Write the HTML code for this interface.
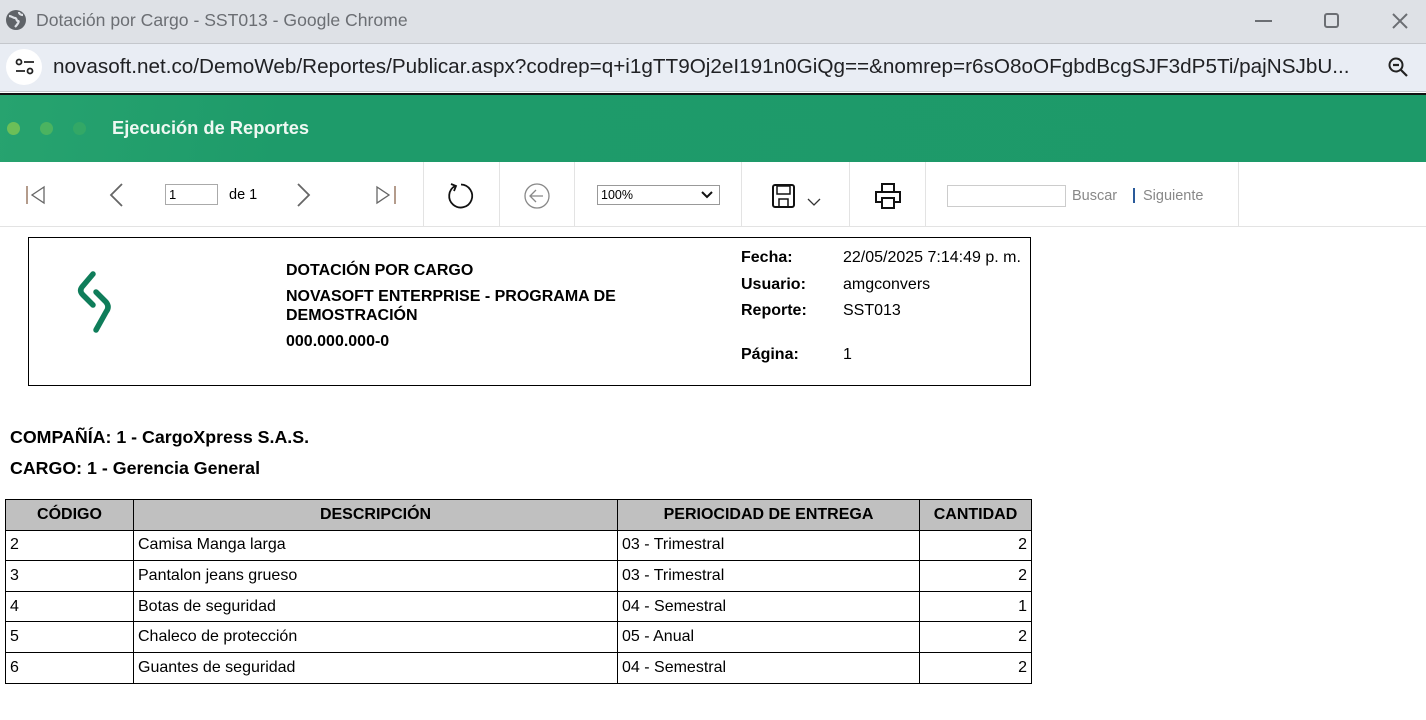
<!DOCTYPE html>
<html><head><meta charset="utf-8"><style>
*{margin:0;padding:0;box-sizing:border-box}
body{width:1426px;height:720px;overflow:hidden;background:#fff;font-family:"Liberation Sans",Arial,sans-serif;position:relative}
.a{position:absolute;white-space:nowrap}
.b{font-weight:bold;font-size:16px;color:#000}
.t{font-size:16px;color:#000}
table{position:absolute;left:5px;top:499px;border-collapse:collapse;font-size:16px}
td,th{border:1px solid #000;height:30.6px;padding:0 4px;line-height:16px}
th{background:#c0c0c0;font-weight:bold;text-align:center}
.sep{position:absolute;top:162px;width:1px;height:64px;background:#e3e3e3}
</style></head><body>
<div class="a" style="left:0;top:0;width:1426px;height:43px;background:#dee1e6"></div>
<svg class="a" style="left:5px;top:9px" width="22" height="22" viewBox="0 0 22 22"><circle cx="11" cy="11" r="10" fill="#5f6368"/><path d="M4 7c3 0 4 2 6 2s1 3 3 3-1 4-3 6M14 3c0 2 2 3 4 3" stroke="#dee1e6" stroke-width="2.2" fill="none"/></svg>
<div class="a" style="left:36px;top:10px;font-size:17.6px;color:#6b6e73">Dotación por Cargo - SST013 - Google Chrome</div>
<div class="a" style="left:1255px;top:20px;width:17px;height:2px;background:#6b6e73"></div>
<div class="a" style="left:1324px;top:13px;width:15px;height:15px;border:2px solid #6b6e73;border-radius:3px"></div>
<svg class="a" style="left:1391px;top:12px" width="18" height="18"><path d="M2 2L16 16M16 2L2 16" stroke="#6b6e73" stroke-width="2"/></svg>
<div class="a" style="left:0;top:43px;width:1426px;height:49px;background:#e9edf4;border-top:1px solid #c4c7cc;border-bottom:1px solid #c4c7cc"></div>
<div class="a" style="left:6px;top:49px;width:36px;height:36px;border-radius:50%;background:#fff"></div>
<svg class="a" style="left:14px;top:57px" width="22" height="20"><circle cx="5" cy="5" r="2.5" fill="none" stroke="#222" stroke-width="1.8"/><path d="M10 5h10M2 14h9" stroke="#222" stroke-width="1.8"/><circle cx="16" cy="14" r="2.5" fill="none" stroke="#222" stroke-width="1.8"/></svg>
<div class="a" style="left:53px;top:55px;font-size:20.7px;color:#202124">novasoft.net.co/DemoWeb/Reportes/Publicar.aspx?codrep=q+i1gTT9Oj2eI191n0GiQg==&amp;nomrep=r6sO8oOFgbdBcgSJF3dP5Ti/pajNSJbU...</div>
<svg class="a" style="left:1387px;top:56px" width="24" height="24"><circle cx="9" cy="9" r="6.5" fill="none" stroke="#222" stroke-width="2"/><path d="M6 9h6M14 14l6 6" stroke="#222" stroke-width="2.2"/></svg>
<div class="a" style="left:0;top:93px;width:1426px;height:2px;background:#111"></div>
<div class="a" style="left:0;top:95px;width:1426px;height:67px;background:linear-gradient(100deg,#27a36f 0%,#1e9b6a 20%,#1d9a69 100%)"></div>
<div class="a" style="left:7px;top:122px;width:13px;height:13px;border-radius:50%;background:#6cbf58"></div>
<div class="a" style="left:40px;top:122px;width:13px;height:13px;border-radius:50%;background:#4bb360"></div>
<div class="a" style="left:73px;top:122px;width:13px;height:13px;border-radius:50%;background:#33a866"></div>
<div class="a" style="left:112px;top:117px;font-size:18.3px;font-weight:bold;color:#eef8f2">Ejecución de Reportes</div>
<div class="a" style="left:0;top:226px;width:1426px;height:1px;background:#e3e3e3"></div>
<div class="sep" style="left:423px"></div><div class="sep" style="left:499px"></div><div class="sep" style="left:574px"></div><div class="sep" style="left:741px"></div><div class="sep" style="left:849px"></div><div class="sep" style="left:925px"></div><div class="sep" style="left:1238px"></div>
<svg class="a" style="left:24px;top:184px" width="24" height="22"><path d="M3 2v18" stroke="#9a7a66" stroke-width="1.5"/><path d="M20 3L8 11l12 8z" fill="none" stroke="#666" stroke-width="1.3"/></svg>
<svg class="a" style="left:106px;top:182px" width="20" height="26"><path d="M16 2L5 13l11 11" fill="none" stroke="#666" stroke-width="1.8"/></svg>
<div class="a" style="left:165px;top:184px;width:53px;height:21px;border:1px solid #aaa;font-size:13px;padding:2px 3px">1</div>
<div class="a" style="left:229px;top:187px;font-size:14.5px">de 1</div>
<svg class="a" style="left:294px;top:182px" width="20" height="26"><path d="M4 2l11 11L4 24" fill="none" stroke="#666" stroke-width="1.8"/></svg>
<svg class="a" style="left:374px;top:184px" width="24" height="22"><path d="M21 2v18" stroke="#9a7a66" stroke-width="1.5"/><path d="M3 3l12 8-12 8z" fill="none" stroke="#666" stroke-width="1.3"/></svg>
<svg class="a" style="left:446px;top:181px" width="30" height="30"><path d="M9 5A11.5 11.5 0 1 0 15 3.5" fill="none" stroke="#111" stroke-width="1.8"/><path d="M5 3l5 2-2 5" fill="none" stroke="#111" stroke-width="1.8"/></svg>
<svg class="a" style="left:523px;top:182px" width="28" height="28"><circle cx="14" cy="14" r="12" fill="none" stroke="#888" stroke-width="1.3"/><path d="M20 14H8M13 8l-6 6 6 6" fill="none" stroke="#888" stroke-width="1.3"/></svg>
<div class="a" style="left:597px;top:185px;width:123px;height:20px;border:1px solid #999;font-size:12.5px;padding:2px 3px">100%</div>
<svg class="a" style="left:700px;top:190px" width="14" height="10"><path d="M2 2l5 5 5-5" fill="none" stroke="#111" stroke-width="2"/></svg>
<svg class="a" style="left:771px;top:183px" width="26" height="26"><rect x="2" y="2" width="21" height="22" rx="2" fill="none" stroke="#111" stroke-width="2"/><rect x="6" y="3" width="13" height="8" fill="none" stroke="#111" stroke-width="1.5"/><rect x="8" y="16" width="9" height="8" fill="none" stroke="#111" stroke-width="1.5"/></svg>
<svg class="a" style="left:806px;top:197px" width="16" height="10"><path d="M2 2l6 6 6-6" fill="none" stroke="#333" stroke-width="1.3"/></svg>
<svg class="a" style="left:874px;top:182px" width="28" height="28"><rect x="8" y="2" width="12" height="8" fill="none" stroke="#111" stroke-width="2"/><rect x="2" y="10" width="24" height="10" fill="none" stroke="#111" stroke-width="2"/><rect x="8" y="16" width="12" height="10" fill="#fff" stroke="#111" stroke-width="2"/></svg>
<div class="a" style="left:947px;top:185px;width:119px;height:22px;border:1px solid #ccc"></div>
<div class="a" style="left:1072px;top:188px;font-size:14.5px;color:#888">Buscar</div>
<div class="a" style="left:1133px;top:188px;width:2px;height:15px;background:#2a5a9a"></div>
<div class="a" style="left:1143px;top:188px;font-size:14.5px;color:#888">Siguiente</div>
<div class="a" style="left:28px;top:237px;width:1003px;height:149px;border:1px solid #000"></div>
<svg class="a" style="left:74px;top:270px" width="42" height="66"><path d="M19 4L8 17Q5 21 9 25L19 35" fill="none" stroke="#0f7d5a" stroke-width="5.5" stroke-linecap="round"/><path d="M22 22L32 32Q36 37 32 42L22 60" fill="none" stroke="#0f7d5a" stroke-width="5.5" stroke-linecap="round"/></svg>
<div class="a b" style="left:286px;top:262px">DOTACIÓN POR CARGO</div>
<div class="a b" style="left:286px;top:288px">NOVASOFT ENTERPRISE - PROGRAMA DE</div>
<div class="a b" style="left:286px;top:307px">DEMOSTRACIÓN</div>
<div class="a b" style="left:286px;top:333px">000.000.000-0</div>
<div class="a b" style="left:741px;top:249px">Fecha:</div><div class="a t" style="left:843px;top:249px">22/05/2025 7:14:49 p. m.</div>
<div class="a b" style="left:741px;top:276px">Usuario:</div><div class="a t" style="left:843px;top:276px">amgconvers</div>
<div class="a b" style="left:741px;top:302px">Reporte:</div><div class="a t" style="left:843px;top:302px">SST013</div>
<div class="a b" style="left:741px;top:346px">Página:</div><div class="a t" style="left:843px;top:346px">1</div>
<div class="a" style="left:10px;top:427px;font-size:17.8px;font-weight:bold">COMPAÑÍA: 1 - CargoXpress S.A.S.</div>
<div class="a" style="left:10px;top:458px;font-size:17.8px;font-weight:bold">CARGO: 1 - Gerencia General</div>
<table>
<tr><th style="width:128px">CÓDIGO</th><th style="width:484px">DESCRIPCIÓN</th><th style="width:302px">PERIOCIDAD DE ENTREGA</th><th style="width:112px">CANTIDAD</th></tr>
<tr><td>2</td><td>Camisa Manga larga</td><td>03 - Trimestral</td><td style="text-align:right">2</td></tr>
<tr><td>3</td><td>Pantalon jeans grueso</td><td>03 - Trimestral</td><td style="text-align:right">2</td></tr>
<tr><td>4</td><td>Botas de seguridad</td><td>04 - Semestral</td><td style="text-align:right">1</td></tr>
<tr><td>5</td><td>Chaleco de protección</td><td>05 - Anual</td><td style="text-align:right">2</td></tr>
<tr><td>6</td><td>Guantes de seguridad</td><td>04 - Semestral</td><td style="text-align:right">2</td></tr>
</table>
</body></html>
